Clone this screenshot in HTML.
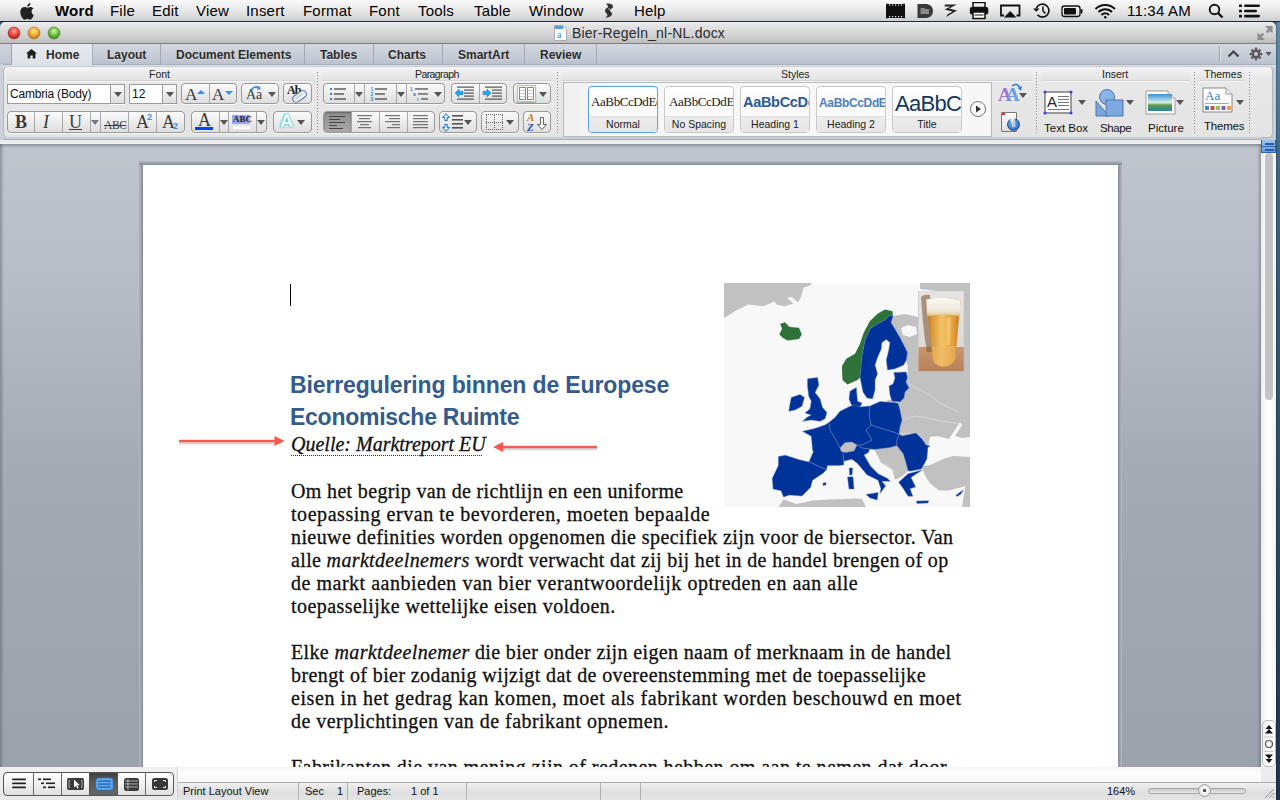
<!DOCTYPE html>
<html><head><meta charset="utf-8">
<style>
*{margin:0;padding:0;box-sizing:border-box}
html,body{width:1280px;height:800px;overflow:hidden;background:#2f5070;font-family:"Liberation Sans",sans-serif;position:relative}
.a{position:absolute}
#menubar{left:0;top:0;width:1280px;height:22px;background:linear-gradient(#fafafa,#e8e8e8 50%,#cfcfcf);border-bottom:1px solid #1e2a38}
.mi{position:absolute;top:2px;font-size:15px;line-height:18px;letter-spacing:.2px;color:#000;white-space:nowrap}
#titlebar{left:0;top:22px;width:1276px;height:22px;background:linear-gradient(#f0f0f0 0,#e4e4e4 15%,#cfcfcf 70%,#bdbdbd);border-bottom:1px solid #7e7e7e;border-top-left-radius:5px;border-top-right-radius:5px}
#tabrow{left:0;top:44px;width:1276px;height:20px;background:linear-gradient(#d3d8e0,#bcc3ce)}
#ribbonbg{left:0;top:64px;width:1276px;height:76px;background:linear-gradient(#a9b0bb 0,#a9b0bb 1px,#dde1e7 1px,#d3d8df 3px,#c9ced7 6px,#c6ccd5)}
#ribbon{left:3px;top:66px;width:1270px;height:72px;background:linear-gradient(#f4f4f4,#e8e8e8 18%,#e4e4e4);border:1px solid #b2b7be;border-top-color:#c8ccd2;border-radius:5px}
#band{left:0;top:137px;width:1261px;height:7px;background:linear-gradient(#c8cdd6 0,#c8cdd6 1.5px,#a9aeb7 2px,#a9aeb7 2.5px,#ededed 3px,#ececec 5.5px,#f4f4f4 7px)}
#docclip{left:0;top:144px;width:1261px;height:623px;overflow:hidden;background:linear-gradient(#c0c4cd 0,#b6bbc5 25%,#abb1bb 41%,#a4aab4 55%,#9ca2ac 100%)}
#docin{position:absolute;left:0;top:-144px;width:1280px;height:800px}
#page{left:143px;top:165px;width:975px;height:700px;background:#fff}
.shl{position:absolute;left:139px;top:165px;width:4px;height:700px;background:linear-gradient(90deg,#b4b9c2,#868c96)}
.sht{position:absolute;left:139px;top:161px;width:983px;height:4px;background:linear-gradient(#b4b9c2,#868c96)}
.shr{position:absolute;left:1118px;top:165px;width:4px;height:700px;background:linear-gradient(90deg,#868c96,#b4b9c2)}
.dtop{position:absolute;left:0;top:144px;width:1261px;height:4px;background:linear-gradient(rgba(80,86,96,.45),rgba(80,86,96,0))}
.dright{position:absolute;left:1257px;top:144px;width:4px;height:700px;background:linear-gradient(90deg,rgba(80,86,96,0),rgba(80,86,96,.4))}
.dleft{position:absolute;left:0;top:144px;width:4px;height:700px;background:linear-gradient(90deg,rgba(80,86,96,.45),rgba(80,86,96,0))}
#scroll{left:1261px;top:140px;width:15px;height:627px;background:linear-gradient(90deg,#ececec,#fafafa 30%,#fff 60%,#f0f0f0)}
#desk{left:1276px;top:22px;width:4px;height:778px;background:linear-gradient(90deg,rgba(0,0,0,.25),rgba(0,0,0,0) 2px),linear-gradient(#5f8eae,#3a6686 20%,#2d5470 50%,#22405f 80%,#1c3456)}
.bt{font-family:"Liberation Serif",serif;font-size:20px;color:#111;-webkit-text-stroke:.3px #111;white-space:nowrap;position:absolute;left:291px;line-height:23px}
.hd{position:absolute;left:290px;font-family:"Liberation Sans",sans-serif;font-weight:bold;font-size:23px;line-height:32px;color:#335b8e;white-space:nowrap}
.qt{position:absolute;left:291px;font-family:"Liberation Serif",serif;font-style:italic;font-size:20px;line-height:23px;color:#111;-webkit-text-stroke:.3px #111;white-space:nowrap}
.tab{position:absolute;top:44px;height:20px;font-size:12px;font-weight:bold;color:#333;text-align:center;line-height:20px;border-right:1px solid #a6adb8;text-shadow:0 1px 0 rgba(255,255,255,.5)}
.glbl{position:absolute;top:68px;font-size:10.5px;color:#222;line-height:13px;white-space:nowrap}
.btn{position:absolute;border:1px solid #9a9a9a;border-radius:4px;background:linear-gradient(#fbfbfb,#ececec 50%,#dedede);box-shadow:0 1px 0 rgba(255,255,255,.7)}
.sep{position:absolute;top:0;bottom:0;width:1px;background:#a8a8a8}
.dd{position:absolute;width:0;height:0;border-left:4px solid transparent;border-right:4px solid transparent;border-top:5px solid #555}
.vdot{position:absolute;width:1px;background-image:linear-gradient(#888 50%,transparent 50%);background-size:1px 3px}
#status{left:0;top:767px;width:1276px;height:33px}
.tabb{position:absolute;top:44px;height:20px;background:linear-gradient(#d3d8e0,#bcc3ce);border-right:1px solid #a3aab6}
.tabt{position:absolute;top:48px;font-size:12px;line-height:14px;font-weight:bold;color:#2b2b2b;white-space:nowrap;text-shadow:0 1px 0 rgba(255,255,255,.45)}
.lband{position:absolute;top:67px;height:14px;background:linear-gradient(rgba(255,255,255,0),rgba(225,225,225,.5));border-bottom:1px solid #d4d4d4;box-shadow:0 1px 0 #f4f4f4}
.rtxt{position:absolute;font-size:12px;line-height:13px;color:#111;white-space:nowrap}
.serA{position:absolute;font-family:"Liberation Serif",serif;font-size:18px;line-height:18px;color:#3a3a3a;white-space:nowrap}
.stile{position:absolute;top:86px;width:70px;height:47px;border:1px solid #c9c9c9;border-radius:4px;background:linear-gradient(#fff,#fafafa 60%);overflow:hidden}
.sprev{position:absolute;top:7px;font-family:"Liberation Serif",serif;font-size:13px;letter-spacing:-.4px;line-height:16px;color:#222;white-space:nowrap}
.slbl{position:absolute;left:0;right:0;bottom:0;height:16px;background:linear-gradient(#ececec,#e6e6e6);border-top:1px solid #e0e0e0;font-size:10.5px;line-height:15px;text-align:center;color:#222}
.rlbl{position:absolute;top:121px;font-size:11.5px;line-height:14px;color:#111;white-space:nowrap}
#scrollthumb{left:1265px;top:153px;width:8px;height:247px;border-radius:4px;background:#c4c4c4}
.stt{position:absolute;top:785px;font-size:11px;line-height:13px;color:#111;white-space:nowrap}
</style></head><body>
<div id="desk" class="a"></div>
<div id="menubar" class="a">
 <svg class="a" style="left:20px;top:2px" width="16" height="18" viewBox="0 0 16 18"><path d="M11.6 9.6c0-2 1.7-3 1.8-3.1-1-1.4-2.5-1.6-3-1.6-1.3-.1-2.5.8-3.2.8-.7 0-1.7-.8-2.8-.7C3 5 1.7 5.8 1 7.1c-1.5 2.6-.4 6.4 1.1 8.5.7 1 1.5 2.2 2.6 2.1 1-.04 1.4-.7 2.7-.7 1.2 0 1.6.7 2.7.6 1.1 0 1.8-1 2.5-2.1.8-1.200 1.100-2.300 1.100-2.400-.02 0-2.100-.8-2.100-3.300zM9.600 3.600c.6-.7 1-1.700.9-2.600-.8 0-1.800.6-2.400 1.300-.5.600-1 1.600-.9 2.500.9.1 1.800-.5 2.400-1.200z" fill="#222"/></svg>
 <span class="mi" style="left:55px;font-weight:bold">Word</span>
 <span class="mi" style="left:110px">File</span>
 <span class="mi" style="left:152px">Edit</span>
 <span class="mi" style="left:196px">View</span>
 <span class="mi" style="left:246px">Insert</span>
 <span class="mi" style="left:303px">Format</span>
 <span class="mi" style="left:369px">Font</span>
 <span class="mi" style="left:418px">Tools</span>
 <span class="mi" style="left:474px">Table</span>
 <span class="mi" style="left:529px">Window</span>
 <span class="mi" style="left:634px">Help</span>
 <span class="mi" style="left:1127px">11:34 AM</span>
</div>
<svg class="a" style="left:600px;top:2px" width="18" height="18" viewBox="0 0 18 18"><path d="M6 2c3-1 7 0 7 2.500 0 2-3 2.500-3 4 0 1.300 2 1.500 2 3.500 0 2.500-4 4-7 3.500 2-1 3-2 2-3.500-1-1.200-2-1.500-2-3.500 0-2 3-2.500 3-4C8 3.500 7 2.800 6 2z" fill="#333"/><path d="M8 6l2 1-1 1z" fill="#ddd"/></svg>
<svg class="a" style="left:884px;top:2px" width="380" height="19" viewBox="884 2 380 19">
 <!-- film strip -->
 <rect x="888" y="4" width="15" height="14" fill="#111"/>
 <g fill="#111"><rect x="886" y="3.5" width="2" height="15" rx="1"/><rect x="903" y="3.5" width="2" height="15" rx="1"/></g>
 <g fill="#e8e8e8"><rect x="889" y="4.5" width="1.2" height="1.2"/><rect x="892" y="4.5" width="1.2" height="1.2"/><rect x="895" y="4.5" width="1.2" height="1.2"/><rect x="898" y="4.5" width="1.2" height="1.2"/><rect x="901" y="4.5" width="1.2" height="1.2"/><rect x="889" y="16" width="1.2" height="1.2"/><rect x="892" y="16" width="1.2" height="1.2"/><rect x="895" y="16" width="1.2" height="1.2"/><rect x="898" y="16" width="1.2" height="1.2"/><rect x="901" y="16" width="1.2" height="1.2"/></g>
 <!-- D -->
 <path d="M917.500 4h8c4 0 7.500 2.500 7.500 7s-3.500 7-7.500 7h-8z" fill="#3a3a3a"/>
 <path d="M920.500 8h4l1 1h3.500v5h-8.500z" fill="#8a8a8a"/>
 <!-- zigzag -->
 <path d="M945 4.500h12l-8 4 8 2-11 6.500 1.500-2.500 5-3-8-2 6-3h-6z" fill="#222"/>
 <!-- printer -->
 <rect x="973" y="2.500" width="12" height="5" fill="none" stroke="#111" stroke-width="1.500"/>
 <rect x="969.800" y="7" width="18.500" height="7.500" rx="2" fill="#111"/>
 <rect x="973" y="12" width="12" height="6.500" fill="#fff" stroke="#111" stroke-width="1.500"/>
 <rect x="974.500" y="14.500" width="9" height="1" fill="#111"/>
 <!-- airplay -->
 <path d="M1004 15.500h-3V5.500h18.500v10h-3" fill="none" stroke="#111" stroke-width="1.800"/>
 <path d="M1004 17.500l6.200-6.500 6.200 6.500z" fill="#111"/>
 <!-- time machine -->
 <path d="M1036.300 8.500a6.500 6.500 0 1 1 1.200 6.300" fill="none" stroke="#111" stroke-width="1.700"/>
 <path d="M1033 8.500l3.300 3.300 3.300-3.300z" fill="#111"/>
 <path d="M1043 6.500v4.500l2.500 2.500" fill="none" stroke="#111" stroke-width="1.500"/>
 <!-- battery -->
 <rect x="1062" y="6" width="18" height="10.500" rx="2.500" fill="none" stroke="#111" stroke-width="1.300"/>
 <rect x="1064" y="8" width="12" height="6.500" rx="1" fill="#111"/>
 <rect x="1080.500" y="9" width="2" height="4.500" rx="1" fill="#111"/>
 <!-- wifi -->
 <g fill="none" stroke="#111" stroke-width="2.100" stroke-linecap="butt">
 <path d="M1095.500 9a14 14 0 0 1 19.500 0"/><path d="M1098.500 12a9.500 9.500 0 0 1 13.500 0"/><path d="M1101.500 15a5 5 0 0 1 7.500 0"/></g>
 <circle cx="1105.300" cy="17.300" r="1.300" fill="#111"/>
 <!-- search -->
 <circle cx="1214.500" cy="9.500" r="4.800" fill="none" stroke="#111" stroke-width="1.900"/>
 <path d="M1218 13l4.500 4.500" stroke="#111" stroke-width="2.400"/>
 <!-- list -->
 <g fill="#111"><rect x="1239" y="4.500" width="3" height="2.600" rx=".6"/><rect x="1239" y="9.700" width="3" height="2.600" rx=".6"/><rect x="1239" y="14.800" width="3" height="2.600" rx=".6"/><rect x="1244" y="4.500" width="16" height="2.600" rx="1.300"/><rect x="1244" y="9.700" width="13" height="2.600" rx="1.300"/><rect x="1244" y="14.800" width="16" height="2.600" rx="1.300"/></g>
</svg>

<div id="titlebar" class="a"></div>
<div id="tabrow" class="a"></div>
<div id="ribbonbg" class="a"></div>
<div id="ribbon" class="a"></div>
<div id="band" class="a"></div>
<div id="docclip" class="a"><div id="docin">
<div class="dtop"></div><div class="dleft"></div><div class="dright"></div>
<div class="sht"></div><div class="shl"></div><div class="shr"></div>
<div id="page" class="a"></div>
<div class="bt" style="top:480px;letter-spacing:0.347px">Om het begrip van de richtlijn en een uniforme</div>
<div class="bt" style="top:503px;letter-spacing:0.552px">toepassing ervan te bevorderen, moeten bepaalde</div>
<div class="bt" style="top:526px;letter-spacing:0.408px">nieuwe definities worden opgenomen die specifiek zijn voor de biersector. Van</div>
<div class="bt" style="top:549px;letter-spacing:0.348px">alle <i>marktdeelnemers</i> wordt verwacht dat zij bij het in de handel brengen of op</div>
<div class="bt" style="top:572px;letter-spacing:0.516px">de markt aanbieden van bier verantwoordelijk optreden en aan alle</div>
<div class="bt" style="top:595px;letter-spacing:0.434px">toepasselijke wettelijke eisen voldoen.</div>
<div class="bt" style="top:641px;letter-spacing:0.364px">Elke <i>marktdeelnemer</i> die bier onder zijn eigen naam of merknaam in de handel</div>
<div class="bt" style="top:664px;letter-spacing:0.400px">brengt of bier zodanig wijzigt dat de overeenstemming met de toepasselijke</div>
<div class="bt" style="top:687px;letter-spacing:0.588px">eisen in het gedrag kan komen, moet als fabrikant worden beschouwd en moet</div>
<div class="bt" style="top:710px;letter-spacing:0.474px">de verplichtingen van de fabrikant opnemen.</div>
<div class="bt" style="top:756px;letter-spacing:0.438px">Fabrikanten die van mening zijn of redenen hebben om aan te nemen dat door</div>

<div class="a" style="left:290px;top:284px;width:1px;height:22px;background:#000"></div>
<div class="hd" style="top:369px;letter-spacing:-0.13px">Bierregulering binnen de Europese</div>
<div class="hd" style="top:401px;letter-spacing:-0.26px">Economische Ruimte</div>
<div class="qt" style="top:433px">Quelle: Marktreport EU</div>
<div class="a" style="left:291px;top:455px;width:191px;height:1px;background-image:linear-gradient(90deg,#333 50%,transparent 50%);background-size:2px 1px"></div>
<svg class="a" style="left:170px;top:425px" width="130" height="40">
 <g opacity=".35" transform="translate(0,2)"><rect x="9" y="15" width="97" height="2.4" fill="#888"/></g>
 <rect x="9" y="14.8" width="97" height="2.4" fill="#f85a52"/>
 <polygon points="104.5,11 114.5,16 104.5,21" fill="#f85a52"/>
</svg>
<svg class="a" style="left:480px;top:432px" width="130" height="40">
 <g opacity=".35" transform="translate(0,2)"><rect x="20" y="13.8" width="97" height="2.4" fill="#888"/></g>
 <rect x="20" y="13.8" width="97" height="2.4" fill="#f85a52"/>
 <polygon points="23,10 13,15 23,20" fill="#f85a52"/>
</svg>
<svg class="a" style="left:724px;top:283px" width="246" height="224" viewBox="724 283 246 224">
<defs>
<linearGradient id="beer" x1="0" y1="0" x2="1" y2="0"><stop offset="0" stop-color="#b87a28"/><stop offset=".3" stop-color="#eab04a"/><stop offset=".6" stop-color="#f0bc58"/><stop offset="1" stop-color="#c88a30"/></linearGradient>
<linearGradient id="tbl" x1="0" y1="0" x2="0" y2="1"><stop offset="0" stop-color="#c89670"/><stop offset="1" stop-color="#b88058"/></linearGradient>
</defs>
<rect x="724" y="283" width="246" height="224" fill="#f8f8f8"/>
<g fill="#c1c1c1">
<polygon points="724,283 812,283 810,285.6 803.7,287.5 800.9,296.9 798,302.5 791.5,296.9 786.8,297.8 793.4,303.4 784.9,306.2 776.5,304.4 774.6,301.6 763.4,306.2 748.4,304.4 735.2,310.9 725,317.5 724,317.5"/>
<polygon points="920,283 970,283 970,293 945,292 920,289"/>
<!-- Russia / east -->
<polygon points="893,316 905,314 918,317 918,291 964,291 970,290 970,437 962,438 955,436 962,425 960,422 949,439 937,436 930,437 927.8,447.5 926.9,458.7 925,462.5 921.2,469 911,471 908,471 906,463 903,454 897,445.6 896.9,440 899,434 900,427 902,420 900,410 898,403 900,402 904,398 905,392 909,388 906,382 908,377.5 907.5,365 906,360 907.5,352.5 903.8,345 900,337.5 896,331 891,322.5"/>
<polygon points="901,328 908,325 916,327 917,334 910,337 903,335" fill="#f8f8f8"/>
<!-- Kaliningrad -->
<polygon points="887,400 895,399 896,403 888,403"/>
<!-- Balkans -->
<polygon points="874.4,449.4 890.3,447.5 896.9,445.6 903.4,454 906.2,463.4 908.1,471 900.6,477.5 895,479.4 892.2,470 880.9,462.5"/>
<!-- Turkey -->
<polygon points="921,466 929.7,465.3 943.7,458.7 953.1,455.9 970,456.9 970,484 962.5,486.9 948.4,490.6 939,490.6 929.7,483.1 925,475.6 923.1,471"/>
<polygon points="966,482 970,478 970,507 962,507"/>
<!-- Switzerland -->
<polygon points="840,448 845,442.5 852,442 857,445 854,451 846,452.5 841,451"/>
<!-- Africa -->
<polygon points="778.4,507 783.6,499.5 796.7,503.9 812.5,500.4 830,499.5 856.2,498.6 862,499 866,507"/>
</g>
<g fill="none" stroke="#e2e2e2" stroke-width=".7">
<polyline points="906,382 916,388 930,395 938,402 950,408 958,412"/>
<polyline points="902,420 915,416 928,418 942,421 960,424"/>
<polyline points="900,434 916,433 924,440"/>
<polyline points="880,462 888,466 895,472"/>
</g>
<!-- Iceland, Norway -->
<g fill="#2e7139">
<polygon points="779.3,334.4 782.1,328.7 780.2,324 784.9,322.2 789.6,326.9 799,327.8 801.8,334.4 799,339 787.7,340.5 783,338.1"/>
<polygon points="870,321 877.5,313.8 885,309.4 892.5,311.3 893,316.3 890,315 885,320 877.5,323.8 870,328.8 865,340 861.9,356.3 860,377.5 857.5,380 847.5,384.4 842.5,380 841.9,366.3 846.3,358.8 855,353.8 860,343.8 863.8,332.5"/>
</g>
<g fill="#003399" stroke="#6a80c0" stroke-width=".45">
<!-- Sweden + Finland -->
<polygon points="893,316.3 891,322.5 896.3,331.3 900,337.5 903.8,345 907.5,352.5 906.3,360 903.8,365 895,368.8 887.5,370 886.3,360 888.8,350 890,342.5 886.3,339.4 881.9,342.5 881.3,348.8 877.5,357.5 875,365 877.5,373.8 875,380 875,390 872.5,398.8 867,398 863,392 861,382 860,377.5 861.9,356.3 865,340 870,328.8 877.5,323.8 885,320 890,315"/>
<!-- Estonia Latvia Lithuania -->
<polygon points="893.8,372.5 906.3,371.9 907.5,377.5 906,382 909,388 905,392 904,398 900,402 892,401 890,395 889,386 893,384 895,378"/>
<!-- Denmark -->
<polygon points="850,391.3 856.3,387.5 857.5,401.3 862,403 860,407 852,406 849,399"/>
<!-- Poland -->
<polygon points="870,406 880,401.5 887,402 898,403 900,410 902,420 900,427 899,434 890,431 880,428 871,425 869,415"/>
<!-- Germany + Benelux -->
<polygon points="835,417.5 840,411.3 845,408.8 850,406.3 855,405 860,407 870,406 869,415 871,425 866,430 872,440 862,445 857,445 852,442 845,442.5 840,448 836,440 830,430 828.8,422.5"/>
<!-- Czech, Austria, Slovakia, Hungary, Slovenia -->
<polygon points="866,430 871,425 880,428 890,431 899,434 896.9,440 896.9,445.6 890.3,447.5 874.4,449.4 869,449 862,448 857,445 862,445 872,440"/>
<!-- France -->
<polygon points="802.5,431.3 813.8,428.8 825,425 828.8,422.5 830,430 836,440 840,448 841,451 843,452 843.8,465 838.7,465.4 827.4,465.4 826.5,469.7 809,461.9 813.4,451.4 812.5,450 811.3,436.3"/>
<!-- Iberia -->
<polygon points="778.4,456.6 785.4,455.3 799.4,459.7 809,461.9 826.5,469.7 823,473.2 812.5,480.2 810.7,487.2 802,496 789.7,495.1 783.6,496.9 781,490.7 773.1,489 772.2,478.5 778.4,465.4"/>
<!-- Italy -->
<polygon points="843,452 846,452.5 854,451 857,445 862,448 869,449 869.7,448.4 868.7,452.2 864,455 870.6,466.2 878.1,473.7 887.5,478.4 890.3,481.2 881.9,481.2 885.6,485.9 880,493.4 880.9,488.7 878.1,480.3 866.9,474.7 857.5,463.4 851.9,459.2 844,461 843.8,465"/>
<polygon points="866,494.4 878.1,492.5 877.2,500 870,498"/>
<polygon points="847.5,477 853,476.7 854,489 849,489"/>
<polygon points="849.2,468 852.7,468 852,475 849.5,475"/>
<polygon points="823,483 826,482.5 826,485 823,485.5"/>
<!-- Romania Bulgaria -->
<polygon points="899,434 902,436 916,433 922,439 926,445 930,446 927.8,447.5 926.9,458.7 925,462.5 921.2,469 911,471 908.1,471 906.2,463.4 903.4,454 896.9,445.6 896.9,440"/>
<!-- Greece -->
<polygon points="898.7,482.2 908.1,473.7 922.2,470 911,477.5 915.6,486.9 910,488.7 912.8,496.2 908.1,496.2 903.4,488.7"/>
<polygon points="916.5,501 928.7,500.8 928,503 917,503.5"/>
<polygon points="955.9,495.3 963.4,489.7 961,494 957,496.5"/>
<!-- UK, Ireland -->
<polygon points="807.5,378.8 817.5,377.5 818.8,385 815,392.5 820,398.8 822.5,407.5 826.9,412.5 825,418.8 820,421.3 811.3,420 802.5,421.3 807.5,416.9 811.3,415 805,413.1 810,408.8 811.3,401.3 808.8,396.3 807.5,386.3"/>
<polygon points="791.3,397.5 800,394.4 804.4,397.5 801.9,406.3 795,410 788.8,411.3 790,403.8"/>
</g>
<!-- beer image -->
<defs>
<linearGradient id="bbg" x1="0" y1="0" x2="0" y2="1"><stop offset="0" stop-color="#e6e4e2"/><stop offset="1" stop-color="#d8d4d0"/></linearGradient>
<linearGradient id="beer2" x1="0" y1="0" x2="1" y2="0"><stop offset="0" stop-color="#b0701e"/><stop offset=".18" stop-color="#dc9a38"/><stop offset=".45" stop-color="#f2c266"/><stop offset=".75" stop-color="#e6a440"/><stop offset="1" stop-color="#c07a24"/></linearGradient>
<linearGradient id="foam" x1="0" y1="0" x2="0" y2="1"><stop offset="0" stop-color="#fbfaf6"/><stop offset=".7" stop-color="#efe8da"/><stop offset="1" stop-color="#e0c890"/></linearGradient>
</defs>
<rect x="918.5" y="291.2" width="45.3" height="80" fill="url(#bbg)"/>
<rect x="918.5" y="347" width="45.3" height="24.2" fill="url(#tbl)"/>
<path d="M921,297 Q924,294 930,295 L934,352 L927,352 Q923,330 921,297 Z" fill="#7a5030" opacity=".55"/>
<path d="M926.2,299.5 Q943,295.5 960.6,300.6 L955.5,358 Q953,366.5 943,366.5 Q934,366.5 932.5,358 Z" fill="url(#beer2)"/>
<path d="M926.2,299.5 Q943,295.5 960.6,300.6 L959.7,316 Q943,313 927.3,316 Z" fill="url(#foam)"/>
<path d="M932,346 L955.8,346 L955.5,358 Q953,366.5 943,366.5 Q934,366.5 932.5,358 Z" fill="#eab868" opacity=".5"/>
<path d="M947,318 L951,318 L950,345 L946.5,345 Z" fill="#fadc98" opacity=".45"/>
</svg>
</div></div>
<div id="scroll" class="a"></div>
<!-- tabs -->
<div class="a" style="left:0;top:44px;width:12px;height:20px;background:linear-gradient(#cfd4dc,#c2c8d1);border-right:1px solid #9aa3b0;border-bottom:1px solid #b8bec8"></div>
<div class="a" style="left:12px;top:44px;width:81px;height:22px;background:linear-gradient(#e6e9ee,#dde1e7);border-right:1px solid #a9b0bb"></div>
<svg class="a" style="left:26px;top:49px" width="11" height="10" viewBox="0 0 11 10"><path d="M5.5 0L0 4.6h1.6V9.5h2.7V6.6h2.4v2.9h2.7V4.6H11z" fill="#1e1e1e"/></svg>
<span class="tabt" style="left:46px">Home</span>
<div class="tabb" style="left:93px;width:68px"></div><span class="tabt" style="left:107px">Layout</span>
<div class="tabb" style="left:161px;width:144px"></div><span class="tabt" style="left:176px">Document Elements</span>
<div class="tabb" style="left:305px;width:69px"></div><span class="tabt" style="left:320px">Tables</span>
<div class="tabb" style="left:374px;width:69px"></div><span class="tabt" style="left:388px">Charts</span>
<div class="tabb" style="left:443px;width:82px"></div><span class="tabt" style="left:458px">SmartArt</span>
<div class="tabb" style="left:525px;width:72px"></div><span class="tabt" style="left:540px">Review</span>
<div class="a" style="left:1219px;top:46px;width:1px;height:17px;background:#9aa2ae;box-shadow:1px 0 0 rgba(255,255,255,.5)"></div>
<svg class="a" style="left:1227px;top:49px" width="13" height="9" viewBox="0 0 13 9"><path d="M1.5 7.5L6.5 2.5L11.5 7.5" stroke="#444" stroke-width="2.2" fill="none"/></svg>
<svg class="a" style="left:1248px;top:46px" width="26" height="16" viewBox="0 0 26 16"><g transform="translate(8,8)" fill="#5a5a5a"><circle r="4.300"/><rect x="-1.200" y="-6.300" width="2.400" height="12.600"/><rect x="-6.300" y="-1.200" width="12.600" height="2.400"/><rect x="-1.200" y="-6.300" width="2.400" height="12.600" transform="rotate(45)"/><rect x="-1.200" y="-6.300" width="2.400" height="12.600" transform="rotate(-45)"/><circle r="1.900" fill="#cfd4dc"/></g><path d="M17.500 6h6l-3 4z" fill="#5a5a5a"/></svg>
<!-- ribbon panel contents -->
<div class="a" style="left:0;top:64px;width:3px;height:76px;background:#cdd2da"></div>
<div class="lband" style="left:7px;width:306px"></div>
<div class="lband" style="left:322px;width:232px"></div>
<div class="lband" style="left:562px;width:470px"></div>
<div class="lband" style="left:1041px;width:149px"></div>
<div class="lband" style="left:1199px;width:46px"></div>
<span class="glbl" style="left:149px">Font</span>
<span class="glbl" style="left:415px;letter-spacing:-.6px">Paragraph</span>
<span class="glbl" style="left:781px">Styles</span>
<span class="glbl" style="left:1102px">Insert</span>
<span class="glbl" style="left:1204px">Themes</span>
<div class="vdot" style="left:317px;top:72px;height:62px"></div>
<div class="vdot" style="left:557px;top:72px;height:62px"></div>
<div class="vdot" style="left:1036px;top:72px;height:62px"></div>
<div class="vdot" style="left:1194px;top:72px;height:62px"></div>
<div class="vdot" style="left:1249px;top:72px;height:62px"></div>
<!-- font row1 -->
<div class="a" style="left:7px;top:84px;width:118px;height:20px;background:#fff;border:1px solid #9c9c9c"></div>
<div class="btn" style="left:110px;top:84px;width:15px;height:20px;border-radius:0"></div><div class="dd" style="left:113.5px;top:92px"></div>
<span class="rtxt" style="left:10px;top:88px;letter-spacing:-.2px">Cambria (Body)</span>
<div class="a" style="left:129px;top:84px;width:48px;height:20px;background:#fff;border:1px solid #9c9c9c"></div>
<div class="btn" style="left:162px;top:84px;width:15px;height:20px;border-radius:0"></div><div class="dd" style="left:165.5px;top:92px"></div>
<span class="rtxt" style="left:132px;top:88px">12</span>
<div class="btn" style="left:181px;top:83px;width:56px;height:21px"><div class="sep" style="left:27px"></div></div>
<span class="serA" style="left:185px;top:86px;font-size:17px">A</span><div class="a" style="left:197px;top:90px;width:0;height:0;border-left:4px solid transparent;border-right:4px solid transparent;border-bottom:4px solid #3a8ee8"></div>
<span class="serA" style="left:212px;top:86px;font-size:17px">A</span><div class="a" style="left:225px;top:91px;width:0;height:0;border-left:4px solid transparent;border-right:4px solid transparent;border-top:4px solid #3a8ee8"></div>
<div class="btn" style="left:241px;top:83px;width:38px;height:21px"></div>
<span class="serA" style="left:246px;top:86px;font-size:14px">Aa</span>
<svg class="a" style="left:250px;top:85px" width="12" height="6" viewBox="0 0 12 6"><path d="M1 5Q5 0 10 3" stroke="#3a8ee8" stroke-width="1.6" fill="none"/><path d="M8 1l3 3-4 1z" fill="#3a8ee8"/></svg>
<div class="dd" style="left:268px;top:92px"></div>
<div class="btn" style="left:283px;top:83px;width:29px;height:21px"></div>
<span class="serA" style="left:287px;top:84px;font-size:12px;line-height:12px;font-weight:bold;color:#222;letter-spacing:-1px">Ab</span>
<svg class="a" style="left:290px;top:89px" width="18" height="14" viewBox="0 0 18 14"><rect x="2" y="4" width="15" height="7" rx="3.5" transform="rotate(-35 9.5 7.5)" fill="#f2f5fa" stroke="#5a78a8" stroke-width="1.1"/><rect x="4" y="6" width="10" height="2" rx="1" transform="rotate(-35 9.5 7.5)" fill="#c8d4e8"/></svg>
<!-- font row2 -->
<div class="btn" style="left:7px;top:111px;width:178px;height:22px"><div class="sep" style="left:26px"></div><div class="sep" style="left:54px"></div><div class="sep" style="left:82px"></div><div class="sep" style="left:92px"></div><div class="sep" style="left:120px"></div><div class="sep" style="left:148px"></div></div>
<span class="serA" style="left:15px;top:113px;font-weight:bold">B</span>
<span class="serA" style="left:43px;top:113px;font-style:italic">I</span>
<span class="serA" style="left:69px;top:113px;text-decoration:underline">U</span>
<div class="dd" style="left:91px;top:120px;border-top-color:#777"></div>
<span class="serA" style="left:104px;top:116px;font-size:11.5px;text-decoration:line-through;letter-spacing:-.4px">ABC</span>
<span class="serA" style="left:136px;top:113px">A</span><span class="a" style="left:147px;top:112px;font-size:9px;color:#3a8ee8;font-weight:bold">2</span>
<span class="serA" style="left:162px;top:113px">A</span><span class="a" style="left:173px;top:121px;font-size:9px;color:#3a8ee8;font-weight:bold">2</span>
<div class="btn" style="left:191px;top:111px;width:76px;height:22px"><div class="sep" style="left:27px"></div><div class="sep" style="left:36px"></div><div class="sep" style="left:64px"></div></div>
<span class="serA" style="left:198px;top:111px">A</span><div class="a" style="left:195px;top:127px;width:18px;height:3px;background:#0a3cf0"></div>
<div class="dd" style="left:220px;top:120px"></div>
<div class="a" style="left:232px;top:115px;width:18px;height:9px;background:#9aa8f0"></div><span class="a" style="left:233px;top:114px;font-family:'Liberation Serif',serif;font-weight:bold;font-size:9px;color:#223">ABC</span>
<div class="a" style="left:233px;top:126px;width:17px;height:3px;background:#fff"></div>
<div class="dd" style="left:257px;top:120px"></div>
<div class="btn" style="left:273px;top:111px;width:39px;height:22px"></div>
<span class="a" style="left:280px;top:111px;font-size:18px;line-height:20px;font-weight:bold;color:#fff;text-shadow:0 0 1px #28c8d0,0 0 1px #28c8d0,0 0 2px #28c8d0,0 0 3px #70e0e8">A</span>
<div class="dd" style="left:297px;top:120px"></div>
<!-- paragraph row1 -->
<div class="btn" style="left:323px;top:83px;width:122px;height:21px"><div class="sep" style="left:30px"></div><div class="sep" style="left:40px"></div><div class="sep" style="left:72px"></div><div class="sep" style="left:82px"></div></div>
<svg class="a" style="left:329px;top:87px" width="20" height="14" viewBox="0 0 20 14"><g fill="#2f7fe0"><rect x="1" y="1" width="2" height="2"/><rect x="1" y="6" width="2" height="2"/><rect x="1" y="11" width="2" height="2"/></g><g fill="#555"><rect x="5" y="1.3" width="12" height="1.4"/><rect x="5" y="6.3" width="10" height="1.4"/><rect x="5" y="11.3" width="12" height="1.4"/></g></svg>
<div class="dd" style="left:355px;top:92px"></div>
<svg class="a" style="left:370px;top:86px" width="20" height="16" viewBox="0 0 20 16"><g fill="#2f7fe0" font-size="5" font-family="Liberation Sans" font-weight="bold"><text x="0.5" y="5">1</text><text x="0.5" y="10">2</text><text x="0.5" y="15">3</text></g><g fill="#555"><rect x="5" y="2.3" width="12" height="1.4"/><rect x="5" y="7.3" width="10" height="1.4"/><rect x="5" y="12.3" width="12" height="1.4"/></g></svg>
<div class="dd" style="left:397px;top:92px"></div>
<svg class="a" style="left:410px;top:86px" width="22" height="16" viewBox="0 0 22 16"><g fill="#2f7fe0" font-size="5" font-family="Liberation Sans" font-weight="bold"><text x="0" y="5">1</text><text x="3" y="10">a</text><text x="7" y="15">i</text></g><g fill="#555"><rect x="5" y="2.3" width="13" height="1.3"/><rect x="8" y="7.3" width="10" height="1.3"/><rect x="11" y="12.3" width="7" height="1.3"/></g></svg>
<div class="dd" style="left:434px;top:92px"></div>
<div class="btn" style="left:451px;top:83px;width:56px;height:21px"><div class="sep" style="left:27px"></div></div>
<svg class="a" style="left:454px;top:86px" width="22" height="15" viewBox="0 0 22 15"><g fill="#555"><rect x="3" y="0.5" width="17" height="1.2"/><rect x="10" y="3.5" width="10" height="1.2"/><rect x="10" y="6.5" width="10" height="1.2"/><rect x="10" y="9.5" width="10" height="1.2"/><rect x="3" y="12.5" width="17" height="1.2"/></g><path d="M1 7l4-4v2.3h4v3.4H5V11z" fill="#1fa8f0" stroke="#1870c0" stroke-width=".5"/></svg>
<svg class="a" style="left:482px;top:86px" width="22" height="15" viewBox="0 0 22 15"><g fill="#555"><rect x="3" y="0.5" width="17" height="1.2"/><rect x="10" y="3.5" width="10" height="1.2"/><rect x="10" y="6.5" width="10" height="1.2"/><rect x="10" y="9.5" width="10" height="1.2"/><rect x="3" y="12.5" width="17" height="1.2"/></g><path d="M9 7L5 3v2.3H1v3.4h4V11z" fill="#1fa8f0" stroke="#1870c0" stroke-width=".5"/></svg>
<div class="btn" style="left:513px;top:83px;width:38px;height:21px"></div>
<div class="a" style="left:517px;top:85px;width:19px;height:17px;background:#fff;border:1px solid #bbb;box-shadow:0 1px 1px rgba(0,0,0,.2)"></div>
<div class="a" style="left:519px;top:87px;width:7px;height:13px;border:1.3px solid #49b04a;background:repeating-linear-gradient(#fff 0,#fff 2px,#ccc 2px,#ccc 3px)"></div>
<div class="a" style="left:527px;top:87px;width:7px;height:13px;border:1.3px solid #49b04a;background:repeating-linear-gradient(#fff 0,#fff 2px,#ccc 2px,#ccc 3px)"></div>
<div class="dd" style="left:539px;top:92px"></div>
<!-- paragraph row2 -->
<div class="btn" style="left:323px;top:111px;width:112px;height:22px;overflow:hidden"><div class="a" style="left:0;top:0;width:27px;height:20px;background:linear-gradient(#8e8e8e,#a9a9a9);box-shadow:inset 0 1px 2px rgba(0,0,0,.3)"></div><div class="sep" style="left:27px"></div><div class="sep" style="left:55px"></div><div class="sep" style="left:83px"></div></div>
<svg class="a" style="left:323px;top:111px" width="112" height="22" viewBox="0 0 112 22"><g fill="#2a2a2a" opacity=".75"><rect x="6" y="5" width="16" height="1"/><rect x="6" y="8" width="11" height="1"/><rect x="6" y="11" width="16" height="1"/><rect x="6" y="14" width="8" height="1"/><rect x="6" y="17" width="14" height="1"/></g><g fill="#555" opacity=".8"><rect x="34" y="4" width="15" height="1.2"/><rect x="36" y="7" width="11" height="1.2"/><rect x="34" y="10" width="15" height="1.2"/><rect x="37" y="13" width="9" height="1.2"/><rect x="35" y="16" width="13" height="1.2"/><rect x="62" y="4" width="15" height="1.2"/><rect x="66" y="7" width="11" height="1.2"/><rect x="62" y="10" width="15" height="1.2"/><rect x="69" y="13" width="8" height="1.2"/><rect x="64" y="16" width="13" height="1.2"/><rect x="90" y="4" width="15" height="1.2"/><rect x="90" y="7" width="15" height="1.2"/><rect x="90" y="10" width="15" height="1.2"/><rect x="90" y="13" width="15" height="1.2"/><rect x="90" y="16" width="15" height="1.2"/></g></svg>
<div class="btn" style="left:439px;top:111px;width:38px;height:22px"></div>
<svg class="a" style="left:442px;top:113px" width="24" height="19" viewBox="0 0 24 19"><path d="M4 0.5L0.5 4.5h2.2v3h2.6v-3h2.2z M4 18.5L0.5 14.5h2.2v-3h2.6v3h2.2z" fill="#cfe6fb" stroke="#2a78d0" stroke-width="1"/><g fill="#555"><rect x="10" y="2" width="11" height="1.6"/><rect x="10" y="6" width="11" height="1.6"/><rect x="10" y="10" width="11" height="1.6"/><rect x="10" y="14" width="11" height="1.6"/></g></svg>
<div class="dd" style="left:464px;top:120px"></div>
<div class="btn" style="left:481px;top:111px;width:38px;height:22px"></div>
<div class="a" style="left:486px;top:114px;width:17px;height:16px;border:1px dotted #666"></div><div class="a" style="left:494px;top:114px;width:1px;height:16px;border-left:1px dotted #666"></div><div class="a" style="left:486px;top:122px;width:17px;height:1px;border-top:1px dotted #666"></div>
<div class="dd" style="left:506px;top:120px"></div>
<div class="btn" style="left:523px;top:111px;width:28px;height:22px"></div>
<span class="a" style="left:527px;top:111px;font-family:'Liberation Serif',serif;font-weight:bold;font-style:italic;font-size:11px;color:#d07820">A</span>
<span class="a" style="left:527px;top:121px;font-family:'Liberation Serif',serif;font-weight:bold;font-style:italic;font-size:11px;color:#2050c0">Z</span>
<svg class="a" style="left:537px;top:117px" width="10" height="13" viewBox="0 0 10 13"><path d="M3.5 0.5h3v7h3L5 12.5 0.5 7.5h3z" fill="#fff" stroke="#666" stroke-width="1"/></svg>
<!-- styles gallery -->
<div class="a" style="left:563px;top:82px;width:429px;height:55px;background:linear-gradient(90deg,#f0f0f0,#f7f7f7 10%,#f7f7f7);border:1px solid #b9b9b9"></div>
<div class="stile" style="left:664px"><span class="sprev" style="left:4px">AaBbCcDdEe</span><span class="slbl">No Spacing</span></div>
<div class="stile" style="left:740px"><span class="sprev" style="left:2px;font-family:'Liberation Sans';font-weight:bold;color:#2c5a92;font-size:14.5px;top:7px;letter-spacing:-.3px">AaBbCcDdEe</span><span class="slbl">Heading 1</span></div>
<div class="stile" style="left:816px"><span class="sprev" style="left:2px;font-family:'Liberation Sans';font-weight:bold;color:#4f81bd;font-size:12px;top:8px;letter-spacing:-.35px">AaBbCcDdEe</span><span class="slbl">Heading 2</span></div>
<div class="stile" style="left:892px"><span class="sprev" style="left:2px;font-family:'Liberation Sans';color:#17365d;font-size:22px;top:6px;line-height:22px;letter-spacing:-.7px">AaBbCcDd</span><span class="slbl">Title</span></div>
<div class="stile" style="left:588px;border:1.5px solid #5ea2e8;box-shadow:0 0 1px #8cc0f4"><span class="sprev" style="left:2px">AaBbCcDdEe</span><span class="slbl">Normal</span></div>
<svg class="a" style="left:969px;top:100px" width="18" height="18" viewBox="0 0 18 18"><circle cx="9" cy="9" r="7.5" fill="#fafafa" stroke="#777" stroke-width="1"/><path d="M7 5.5v7l5-3.5z" fill="#333"/></svg>
<span class="a" style="left:998px;top:84px;font-family:'Liberation Serif',serif;font-weight:bold;font-size:19px;color:#9a78d0;letter-spacing:-6px">A<span style="color:#6a9ee0">A</span></span>
<svg class="a" style="left:1010px;top:83px" width="14" height="10" viewBox="0 0 14 10"><path d="M2 3Q7 -1 10 5" stroke="#2a78d0" stroke-width="1.5" fill="none"/><path d="M8 5l3 3 1-5z" fill="#2a78d0"/></svg>
<div class="dd" style="left:1019px;top:93px"></div>
<div class="a" style="left:1001px;top:112px;width:16px;height:20px;background:linear-gradient(#fff,#ddd);border:1px solid #777;border-radius:1px"></div>
<div class="a" style="left:1002px;top:113px;width:3px;height:2px;background:#e03020"></div>
<div class="a" style="left:1007px;top:118px;width:13px;height:13px;border-radius:50%;background:radial-gradient(circle at 40% 35%,#7ab0f0,#1b5bb8);border:1px solid #1a4a90"></div>
<span class="a" style="left:1010px;top:117px;font-size:10px;font-weight:bold;color:#fff">&para;</span>
<!-- insert -->
<svg class="a" style="left:1043px;top:90px" width="30" height="25" viewBox="0 0 30 25"><rect x="2" y="2" width="26" height="21" fill="#fff" stroke="#444" stroke-width="1"/><rect x="2.5" y="22" width="26" height="1.5" fill="#999"/><text x="4" y="17" font-family="Liberation Sans" font-size="15" fill="#222">A</text><g fill="#777"><rect x="15" y="6" width="11" height="1"/><rect x="15" y="9" width="11" height="1"/><rect x="15" y="12" width="11" height="1"/><rect x="15" y="15" width="11" height="1"/><rect x="5" y="19" width="21" height="1"/></g><g fill="#4040e0"><circle cx="2" cy="2" r="1.5"/><circle cx="28" cy="2" r="1.5"/><circle cx="2" cy="23" r="1.5"/><circle cx="28" cy="23" r="1.5"/></g></svg>
<div class="dd" style="left:1078px;top:100px"></div>
<svg class="a" style="left:1095px;top:88px" width="30" height="30" viewBox="0 0 30 30"><path d="M1 13L14 28H1z" fill="#7aa6dc" stroke="#4a74b0" stroke-width="1"/><circle cx="12" cy="9" r="7.5" fill="#8ab4e8" stroke="#4a74b0" stroke-width="1"/><rect x="11" y="12" width="17" height="16" fill="#7ea8e0" stroke="#4a74b0" stroke-width="1"/></svg>
<div class="dd" style="left:1126px;top:100px"></div>
<svg class="a" style="left:1145px;top:90px" width="32" height="26" viewBox="0 0 32 26"><path d="M1 1h22l7 7v16H1z" fill="#fff" stroke="#999" stroke-width="1"/><path d="M23 1v7h7" fill="#eee" stroke="#aaa" stroke-width="1"/><defs><linearGradient id="pic" x1="0" y1="0" x2="0" y2="1"><stop offset="0" stop-color="#3a90d0"/><stop offset=".5" stroke-color="#cfe8f0" stop-color="#d8eef0"/><stop offset=".65" stop-color="#5aa040"/><stop offset="1" stop-color="#2e7cc0"/></linearGradient></defs><rect x="3" y="4" width="24" height="17" fill="url(#pic)"/></svg>
<div class="dd" style="left:1176px;top:100px"></div>
<span class="rlbl" style="left:1044px">Text Box</span>
<span class="rlbl" style="left:1100px;letter-spacing:-.4px">Shape</span>
<span class="rlbl" style="left:1148px">Picture</span>
<!-- themes -->
<svg class="a" style="left:1202px;top:87px" width="32" height="27" viewBox="0 0 32 27"><path d="M1 1h23l6 6v18H1z" fill="#fff" stroke="#888" stroke-width="1"/><path d="M24 1v6h6" fill="#eee" stroke="#999" stroke-width="1"/><text x="3" y="13" font-family="Liberation Serif" font-size="13" fill="#3a7ad0">Aa</text><g fill="#aaa"><rect x="3" y="16" width="24" height="1"/></g><rect x="3" y="19" width="4" height="4" fill="#4f81bd"/><rect x="8.5" y="19" width="4" height="4" fill="#c0504d"/><rect x="14" y="19" width="4" height="4" fill="#9bbb59"/><rect x="19.5" y="19" width="4" height="4" fill="#8064a2"/><rect x="25" y="19" width="4" height="4" fill="#f79646"/></svg>
<div class="dd" style="left:1236px;top:100px"></div>
<span class="rlbl" style="left:1204px;top:119px;letter-spacing:-.2px">Themes</span>
<!-- title bar content -->
<svg class="a" style="left:7px;top:26px" width="56" height="14" viewBox="0 0 56 14">
<defs>
<radialGradient id="tr" cx=".5" cy=".35" r=".6"><stop offset="0" stop-color="#ffb0a8"/><stop offset=".5" stop-color="#f0524a"/><stop offset="1" stop-color="#b81c18"/></radialGradient>
<radialGradient id="ty" cx=".5" cy=".35" r=".6"><stop offset="0" stop-color="#ffe6a0"/><stop offset=".5" stop-color="#f5b33c"/><stop offset="1" stop-color="#c07818"/></radialGradient>
<radialGradient id="tg" cx=".5" cy=".35" r=".6"><stop offset="0" stop-color="#d8f8b0"/><stop offset=".5" stop-color="#7cc84a"/><stop offset="1" stop-color="#3e8a22"/></radialGradient>
</defs>
<circle cx="7" cy="7" r="6" fill="url(#tr)" stroke="#9a3a38" stroke-width=".6"/>
<circle cx="27" cy="7" r="6" fill="url(#ty)" stroke="#9a7030" stroke-width=".6"/>
<circle cx="47" cy="7" r="6" fill="url(#tg)" stroke="#4a7a30" stroke-width=".6"/>
</svg>
<svg class="a" style="left:554px;top:25px" width="13" height="16" viewBox="0 0 13 16"><path d="M.5 .5h8l4 4v11H.5z" fill="#fff" stroke="#aab" stroke-width="1"/><rect x="1" y="1" width="8" height="3" fill="#4aa0e0"/><text x="3" y="13" font-family="Liberation Serif" font-size="10" fill="#3a88d0">a</text></svg>
<span class="a" style="left:572px;top:25px;font-size:14px;line-height:17px;letter-spacing:.2px;color:#2a2a2a;white-space:nowrap">Bier-Regeln_nl-NL.docx</span>
<svg class="a" style="left:1256px;top:25px" width="17" height="16" viewBox="0 0 17 16"><g fill="#8e8e8e"><path d="M16.500 1V8.500L13.900 5.900 11.600 8.200 9.800 6.400 12.100 4.100 9 1z"/><path d="M1.500 15V7.500L4.100 10.100 6.400 7.800 8.200 9.600 5.900 11.900 9 15z"/></g></svg>
<!-- scroll -->
<div id="scrollthumb" class="a"></div>
<div class="a" style="left:1261px;top:140px;width:15px;height:13px;background:linear-gradient(#9cc4f0,#6a9ee0);border:1px solid #2a62b8;border-top:none"></div>
<div class="a" style="left:1265px;top:143px;width:9px;height:1.5px;background:#2a5aa8"></div>
<div class="a" style="left:1261px;top:146px;width:15px;height:1px;background:#2a62b8"></div>
<div class="a" style="left:1265px;top:149px;width:9px;height:1.5px;background:#2a5aa8"></div>
<div class="a" style="left:1262px;top:720px;width:14px;height:47px;border:1px solid #b8b8b8;border-radius:5px;background:linear-gradient(90deg,#f4f4f4,#fff)"></div>
<svg class="a" style="left:1263px;top:722px" width="12" height="44" viewBox="0 0 12 44"><path d="M6 3l-3.5 4h7z M6 7l-3.5 4h7z" fill="#111"/><rect x="1" y="14.5" width="10" height="1" fill="#c8c8c8"/><circle cx="6" cy="22" r="3.5" fill="none" stroke="#555" stroke-width="1.2"/><rect x="1" y="29" width="10" height="1" fill="#c8c8c8"/><path d="M6 41l-3.5-4h7z M6 37l-3.5-4h7z" fill="#111"/><rect x="2.5" y="32.5" width="7" height="1" fill="#111"/><rect x="2.5" y="10.5" width="7" height="1" fill="#111"/></svg>
<!-- status bar -->
<div class="a" style="left:0;top:767px;width:178px;height:33px;background:linear-gradient(#f0f0f0,#e9e9e9);border-right:1px solid #d4d4d4"></div>
<div class="a" style="left:178px;top:767px;width:1083px;height:16px;background:linear-gradient(#f6f6f6,#fdfdfd 40%,#f8f8f8);border-bottom:1px solid #a9a9a9"></div>
<div class="a" style="left:1261px;top:767px;width:15px;height:16px;background:#ececec;border-bottom:1px solid #a9a9a9"></div>
<div class="a" style="left:178px;top:783px;width:1098px;height:17px;background:linear-gradient(#f0f0f0,#dedede 60%,#e4e4e4)"></div>
<div class="a" style="left:298px;top:783px;width:1px;height:17px;background:#b0b0b0"></div>
<div class="a" style="left:347px;top:783px;width:1px;height:17px;background:#b0b0b0"></div>
<div class="a" style="left:466px;top:783px;width:1px;height:17px;background:#b0b0b0"></div>
<div class="a" style="left:600px;top:783px;width:1px;height:17px;background:#b0b0b0"></div>
<div class="a" style="left:640px;top:783px;width:1px;height:17px;background:#b0b0b0"></div>
<span class="stt" style="left:183px">Print Layout View</span>
<span class="stt" style="left:305px">Sec</span><span class="stt" style="left:337px">1</span>
<span class="stt" style="left:357px">Pages:</span><span class="stt" style="left:411px">1 of 1</span>
<span class="stt" style="left:1107px">164%</span>
<div class="a" style="left:1148px;top:788px;width:98px;height:6px;border-radius:3px;background:linear-gradient(#c8c8c8,#e8e8e8);border:1px solid #a8a8a8"></div>
<div class="a" style="left:1198px;top:784px;width:13px;height:13px;border-radius:50%;background:radial-gradient(circle,#555 0,#555 1.5px,#f8f8f8 2px,#d8d8d8);border:1px solid #a0a0a0"></div>
<svg class="a" style="left:1262px;top:786px" width="13" height="13" viewBox="0 0 13 13"><path d="M12 3L3 12M12 7L7 12M12 10.5L10.5 12" stroke="#999" stroke-width="1"/></svg>
<div class="a" style="left:3px;top:772px;width:171px;height:24px;border:1px solid #555;border-radius:4px;background:linear-gradient(#fefefe,#f2f2f2 50%,#dedede);overflow:hidden">
 <div class="a" style="left:85px;top:0;width:28px;height:22px;background:linear-gradient(#3e3e3e,#5a5a5a 40%,#666)"></div>
 <div class="sep" style="left:29px;background:#666"></div><div class="sep" style="left:57px;background:#666"></div><div class="sep" style="left:85px;background:#555"></div><div class="sep" style="left:113px;background:#555"></div><div class="sep" style="left:141px;background:#666"></div>
</div>
<svg class="a" style="left:3px;top:772px" width="171" height="24" viewBox="0 0 171 24">
<g fill="#222"><rect x="9" y="6.5" width="14" height="1.8" rx=".9"/><rect x="9" y="10.5" width="14" height="1.8" rx=".9"/><rect x="9" y="14.5" width="14" height="1.8" rx=".9"/></g>
<g fill="#222"><rect x="35" y="6.5" width="3" height="1.6"/><rect x="40" y="6.5" width="8" height="1.6"/><rect x="38" y="10.5" width="3" height="1.6"/><rect x="43" y="10.5" width="9" height="1.6"/><rect x="40" y="14.5" width="3" height="1.6"/><rect x="45" y="14.5" width="7" height="1.6"/></g>
<rect x="64" y="6" width="17" height="12" rx="2" fill="#3a3a3a"/><g fill="none" stroke="#ccc" stroke-width=".8"><path d="M67 8.5h-1v7h1M78 8.5h1v7h-1"/></g><path d="M71 7.500v8l2-1.800 1.500 3 1.200-.600-1.500-2.800h2.600z" fill="#fff"/>
<rect x="93" y="6" width="17" height="12" rx="2.5" fill="#62aef0" stroke="#2a78c8" stroke-width=".8"/><g fill="#1d5aa0"><rect x="95" y="8.5" width="13" height="1.2"/><rect x="95" y="11.5" width="13" height="1.2"/><rect x="95" y="14.5" width="13" height="1.2"/></g>
<rect x="121" y="6" width="15" height="13" rx="2.5" fill="#383838"/><g fill="#bbb"><rect x="122" y="8.5" width="13" height=".9"/><rect x="122" y="11.5" width="13" height=".9"/><rect x="122" y="14.5" width="13" height=".9"/><rect x="124.500" y="7" width=".9" height="11"/></g>
<rect x="149" y="6" width="16" height="12" rx="2.5" fill="#383838"/><g stroke="#eee" stroke-width="1" fill="none"><path d="M151.500 10V8.500h2.500M162.500 10V8.500H160M151.500 14v1.500h2.500M162.500 14v1.500H160"/></g>
</svg>
</body></html>
